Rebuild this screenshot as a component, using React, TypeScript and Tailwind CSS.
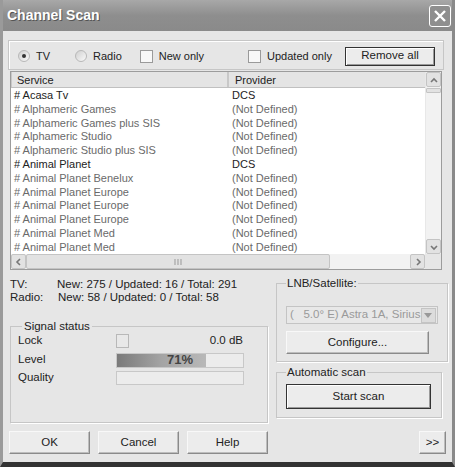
import React from 'react';

const rows: [string, string, boolean][] = [
  ['# Acasa Tv', 'DCS', true],
  ['# Alphameric Games', '(Not Defined)', false],
  ['# Alphameric Games plus SIS', '(Not Defined)', false],
  ['# Alphameric Studio', '(Not Defined)', false],
  ['# Alphameric Studio plus SIS', '(Not Defined)', false],
  ['# Animal Planet', 'DCS', true],
  ['# Animal Planet Benelux', '(Not Defined)', false],
  ['# Animal Planet Europe', '(Not Defined)', false],
  ['# Animal Planet Europe', '(Not Defined)', false],
  ['# Animal Planet Europe', '(Not Defined)', false],
  ['# Animal Planet Med', '(Not Defined)', false],
  ['# Animal Planet Med', '(Not Defined)', false],
];

// botón clásico con relieve
const Boton: React.FC<{ label: string; className?: string; predeterminado?: boolean }> = ({
  label,
  className = '',
  predeterminado,
}) => (
  <div
    className={`flex items-center justify-center bg-[#ececec] text-[11.5px] text-[#222] ${
      predeterminado
        ? 'border border-[#333] shadow-[inset_1px_1px_0_#fff,inset_-1px_-1px_0_#9a9a9a]'
        : 'border border-t-[#f8f8f8] border-l-[#f8f8f8] border-r-[#8a8a8a] border-b-[#8a8a8a] shadow-[inset_-1px_-1px_0_#bdbdbd]'
    } ${className}`}
  >
    {label}
  </div>
);

const Radio: React.FC<{ checked?: boolean }> = ({ checked }) => (
  <div className="w-[12px] h-[12px] rounded-full bg-gradient-to-br from-[#d0d0d0] to-[#fafafa] border border-[#b8b8b8] flex items-center justify-center">
    {checked && <div className="w-[4px] h-[4px] rounded-full bg-[#333]" />}
  </div>
);

const Check = () => <div className="w-[13px] h-[13px] bg-[#f8f8f8] border border-[#9a9a9a]" />;

const Flecha: React.FC<{ dir: 'up' | 'down' | 'left' | 'right' }> = ({ dir }) => {
  const d = {
    up: 'M2 7 L5 4 L8 7',
    down: 'M2 4 L5 7 L8 4',
    left: 'M6 2 L3 5 L6 8',
    right: 'M4 2 L7 5 L4 8',
  }[dir];
  return (
    <svg width="10" height="10" viewBox="0 0 10 10">
      <path d={d} fill="none" stroke="#777" strokeWidth="1.6" />
    </svg>
  );
};

const BotonScroll: React.FC<{ dir: 'up' | 'down' | 'left' | 'right' }> = ({ dir }) => (
  <div className="w-[15px] h-[15px] flex items-center justify-center bg-[#e2e2e2] border border-[#c4c4c4] rounded-[2px]">
    <Flecha dir={dir} />
  </div>
);

export default function App() {
  return (
    <div
      className="w-[455px] h-[467px] bg-[#e6e6e6] border-l-[3px] border-r-[3px] border-b-[5px] border-l-[#9a9a9a] border-r-[#8a8a8a] border-b-[#333] flex flex-col overflow-hidden text-[#222] text-[11px]"
      style={{ fontFamily: '"Liberation Sans", Arial, sans-serif' }}
    >
      {/* barra de título */}
      <div className="h-[31px] shrink-0 flex items-center justify-between bg-gradient-to-b from-[#a8a8a8] via-[#8e8e8e] to-[#8a8a8a] -mx-[3px] pl-[7px] pr-[4px]">
        <span className="text-white font-bold text-[14px] [text-shadow:1px_1px_0_#555]">Channel Scan</span>
        <div className="w-[22px] h-[22px] border border-white rounded-[3px] bg-[#8f8f8f] flex items-center justify-center">
          <svg width="14" height="14" viewBox="0 0 14 14">
            <path d="M2 2 L12 12 M12 2 L2 12" stroke="#fff" strokeWidth="2.4" />
          </svg>
        </div>
      </div>

      <div className="flex flex-col px-[5px] pt-[9px]">
        {/* opciones superiores */}
        <div className="h-[30px] w-[436px] border border-[#c6c6c6] shadow-[inset_1px_1px_0_#fff] flex items-center pl-[9px] pt-[2px]">
          <Radio checked />
          <span className="ml-[6px]">TV</span>
          <div className="ml-[25px]"><Radio /></div>
          <span className="ml-[6px]">Radio</span>
          <div className="ml-[18px]"><Check /></div>
          <span className="ml-[6px]">New only</span>
          <div className="ml-[44px]"><Check /></div>
          <span className="ml-[6px]">Updated only</span>
          <Boton label="Remove all" predeterminado className="ml-auto mr-[8px] w-[90px] h-[19px]" />
        </div>

        {/* lista */}
        <div className="mt-[1px] ml-[2px] w-[432px] h-[199px] bg-white border border-[#9c9c9c] flex flex-col text-[11px]">
          <div className="flex flex-1 min-h-0">
            <div className="flex-1 flex flex-col">
              <div className="h-[16px] flex bg-[#e4e4e4] border-b border-[#c0c0c0]">
                <div className="w-[218px] pl-[5px] leading-[16px] border-r-2 border-[#c8c8c8] border-l border-l-[#c8c8c8]">Service</div>
                <div className="flex-1 pl-[6px] leading-[16px]">Provider</div>
              </div>
              <div className="pt-[1px]">
                {rows.map(([s, p, on], i) => (
                  <div key={i} className={`flex h-[13.8px] leading-[13.8px] ${on ? 'text-[#222]' : 'text-[#6a6a6a]'}`}>
                    <div className="w-[218px] pl-[3px]">{s}</div>
                    <div className="pl-[3px]">{p}</div>
                  </div>
                ))}
              </div>
            </div>
            <div className="w-[16px] flex flex-col items-center bg-[#f2f2f2] border-l border-[#e8e8e8]">
              <BotonScroll dir="up" />
              <div className="w-[15px] h-[5px] mt-[1px] bg-[#e2e2e2] border border-[#c4c4c4] rounded-[1px]" />
              <div className="flex-1" />
              <BotonScroll dir="down" />
            </div>
          </div>
          <div className="h-[15px] flex bg-[#f2f2f2]">
            <BotonScroll dir="left" />
            <div className="w-[304px] h-[15px] bg-[#e2e2e2] border border-[#c4c4c4] rounded-[2px] flex items-center justify-center">
              <svg width="8" height="6" viewBox="0 0 8 6">
                <path d="M1 0 V6 M4 0 V6 M7 0 V6" stroke="#999" strokeWidth="1" />
              </svg>
            </div>
            <div className="flex-1" />
            <BotonScroll dir="right" />
            <div className="w-[16px] bg-[#e6e6e6]" />
          </div>
        </div>

        {/* estadísticas y grupos */}
        <div className="flex mt-[8px] ml-[2px]">
          <div className="w-[258px] flex flex-col">
            <div className="leading-[13px] text-[11.5px]">
              <div className="flex"><span className="w-[47px]">TV:</span><span>New: 275 / Updated: 16 / Total: 291</span></div>
              <div className="flex"><span className="w-[48px]">Radio:</span><span>New: 58 / Updated: 0 / Total: 58</span></div>
            </div>
            <fieldset className="mt-[15px] h-[104px] border border-[#c6c6c6] shadow-[1px_1px_0_#fff] px-[7px] text-[11.5px]">
              <legend className="px-[2px] ml-[4px] leading-[14px]">Signal status</legend>
              <div className="flex items-center h-[16px]">
                <span className="w-[98px]">Lock</span>
                <div className="w-[13px] h-[14px] border border-[#b8b8b8] bg-[#e8e8e8]" />
                <span className="ml-auto mr-[17px]">0.0 dB</span>
              </div>
              <div className="flex items-center h-[18px] mt-[2px]">
                <span className="w-[98px]">Level</span>
                <div className="relative w-[128px] h-[15px] border border-[#c8c8c8] bg-[#ececec]">
                  <div className="absolute left-0 top-0 bottom-0 bg-gradient-to-r from-[#7a7a7a] via-[#a4a4a4] to-[#b8b8b8]" style={{ width: '71%' }} />
                  <span className="absolute inset-0 flex items-center justify-center font-bold text-[#444] text-[13px]">71%</span>
                </div>
              </div>
              <div className="flex items-center h-[16px] mt-[1px]">
                <span className="w-[98px]">Quality</span>
                <div className="w-[128px] h-[14px] border border-[#c8c8c8] bg-[#ececec]" />
              </div>
            </fieldset>
          </div>

          <div className="ml-[8px] w-[166px] flex flex-col text-[11.5px]">
            <fieldset className="h-[86px] border border-[#c6c6c6] shadow-[1px_1px_0_#fff] px-[9px] mt-[-2px]">
              <legend className="px-[1px] leading-[14px]">LNB/Satellite:</legend>
              <div className="mt-[16px] flex h-[18px] border border-[#c4c4c4] bg-[#e8e8e8] text-[#9a9a9a] items-center">
                <span className="pl-[3px] flex-1 whitespace-nowrap overflow-hidden">(&nbsp;&nbsp;&nbsp;5.0° E) Astra 1A, Sirius</span>
                <div className="w-[15px] h-[15px] flex items-center justify-center bg-[#dcdcdc] border border-[#c4c4c4] mr-[1px]">
                  <svg width="8" height="5" viewBox="0 0 8 5"><path d="M0 0 H8 L4 5 Z" fill="#999" /></svg>
                </div>
              </div>
              <Boton label="Configure..." className="mt-[7px] h-[23px] w-[143px]" />
            </fieldset>
            <fieldset className="mt-[3px] h-[53px] border border-[#c6c6c6] shadow-[1px_1px_0_#fff] px-[9px]">
              <legend className="px-[1px] leading-[14px]">Automatic scan</legend>
              <Boton label="Start scan" predeterminado className="mt-[5px] h-[25px] w-[145px]" />
            </fieldset>
          </div>
        </div>

        {/* botones inferiores */}
        <div className="flex mt-[8px] ml-[1px]">
          <Boton label="OK" className="w-[81px] h-[23px]" />
          <Boton label="Cancel" className="ml-[8px] w-[81px] h-[23px]" />
          <Boton label="Help" className="ml-[8px] w-[81px] h-[23px]" />
          <Boton label=">>" className="ml-auto mr-[1px] w-[27px] h-[23px]" />
        </div>
      </div>
    </div>
  );
}
